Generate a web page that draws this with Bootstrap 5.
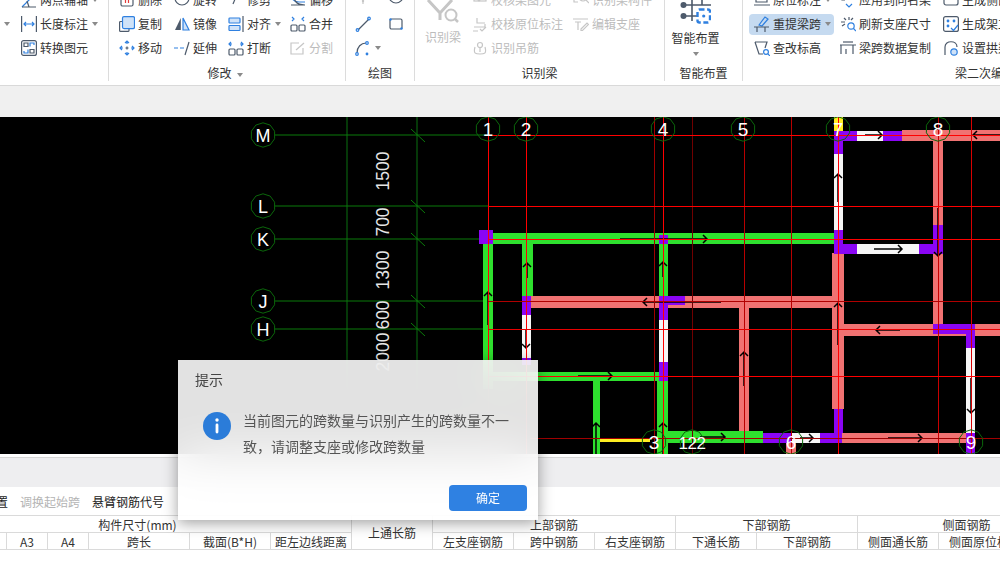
<!DOCTYPE html>
<html lang="zh">
<head>
  <meta charset="utf-8">
  <title>梁二次编辑</title>
  <link href="https://cdn.jsdelivr.net/npm/bootstrap@5.3.2/dist/css/bootstrap.min.css" rel="stylesheet">
  <style>
    html, body { margin: 0; height: 582px; overflow: hidden; background: #fff; }
    body { font-family: "Noto Sans CJK SC", "Liberation Sans", sans-serif; font-size: 12px; color: #333; }
    .app-page { position: relative; width: 1000px; height: 582px; overflow: hidden; }

    .rb-wrap { height: 86px; overflow: hidden; border-bottom: 1px solid #d9d9d9; }
    .rb-inner { margin-top: -12px; width: 1300px; }
    .rb-group { height: 93px; flex: none; border-right: 1px solid #dcdcdc; }
    .rb-cols { height: 72px; }
    .rb-col { flex: none; }
    .rb-item { height: 24px; gap: 3px; white-space: nowrap; line-height: 16px; }
    .rb-off { color: #bcbcbc; }
    .rb-active { background: #c5daf0; border-radius: 4px; height: 21px; margin: 1.5px 6px 1.5px 0; padding-left: 5px; }
    .rb-pad { padding-left: 5px; }
    .rb-label { height: 21px; line-height: 25px; text-align: center; white-space: nowrap; }
    .rb-caret { width: 0; height: 0; border: 3px solid transparent; border-top: 4px solid #8a8a8a; border-bottom: 0; margin-left: 1px; flex: none; }
    .rb-caret-lg { border-width: 4px 3.5px 0; margin: 0 4px 0 5px; }
    .rb-big { text-align: center; white-space: nowrap; line-height: 16px; }
    .rb-g1 { width: 109px; }
    .rb-g2 { width: 237px; padding-left: 10px; }
    .rb-g2 .rb-label { margin-left: -10px; }
    .rb-g3 { width: 69px; padding-left: 9px; }
    .rb-g3 .rb-label { margin-left: -9px; }
    .rb-g4 { width: 250px; padding-left: 10px; }
    .rb-g4 .rb-label { margin-left: -10px; }
    .rb-g5 { width: 78px; }
    .rb-g6 { width: 484px; padding-left: 6px; border-right: 0; }
    .rb-g6 .rb-label { margin-left: -6px; }
    .rb-smart { width: 49px; margin-left: 6px; }
    .rb-smart svg { margin-left: 9px; }
    .rb-smart-txt { margin-top: 6px; }
    .rb-smart-arrow { margin-top: 6px; }
    .rb-beam { width: 36px; margin-right: 11px; }
    .rb-beam-txt { margin-top: 4px; }
    .w-cut { width: 21px; padding-right: 11px; overflow: hidden; }
    .w-85 { width: 87px; }
    .w-55 { width: 55px; }
    .w-54 { width: 54px; }
    .w-62 { width: 62px; }
    .w-33 { width: 33px; }
    .w-101 { width: 101px; }
    .w-91 { width: 91px; }
    .w-103 { width: 103px; }

    .ic { width: 16px; height: 16px; flex: none; fill: none; stroke: #4d5a6b; stroke-width: 1.2; }
    .ic-big { display: block; fill: none; stroke: #4d5a6b; stroke-width: 1.6; }
    .sb { stroke: #2f80e0; }
    .sr { stroke: #e23b3b; }
    .fb { fill: #cfe2f8; }
    .fd { fill: #4d5a6b; stroke: none; }
    .fu { fill: #2f80e0; stroke: none; }
    .rb-off .ic, .rb-off .ic-big { stroke: #c6c6c6; }
    .rb-off .sb { stroke: #c6c6c6; }

    .gap-strip-a { height: 31px; background: #f0f0f0; }
    .cad-view { display: block; width: 1000px; height: 337px; background: #000; }
    .gap-strip-b { height: 4px; background: #fff; border-bottom: 1px solid #d6d6d6; }
    .gap-strip-c { height: 29px; background: #eeeef0; }
    .tool-row { height: 28px; margin-left: -16px; padding-top: 1px; gap: 12px; white-space: nowrap; color: #222; }
    .tool-off { color: #b4b4b4; }

    .grid-wrap { width: 1000px; overflow: hidden; }
    .grid-head { table-layout: fixed; width: 1152px; margin-left: -77px; --bs-table-bg: transparent; --bs-table-color: #333; --bs-border-color: #dadada; }
    .grid-head th, .grid-head td { padding: 0; height: 17px; line-height: 15px; font-size: 12px; font-weight: 400; text-align: center; vertical-align: middle; white-space: nowrap; overflow: hidden; }
    .grid-head .cell-left { text-align: left; padding-left: 10px; }

    .tip-box { position: absolute; left: 178px; top: 360px; width: 360px; height: 160px; border: 0; border-radius: 0; background: rgba(255,255,255,.885); -webkit-backdrop-filter: blur(24px); backdrop-filter: blur(24px); box-shadow: 0 3px 14px rgba(0,0,0,.38); padding: 10px 11px 9px 17px; }
    .tip-title { font-size: 14px; line-height: 18px; color: #444; }
    .tip-msg { font-size: 14px; line-height: 26px; color: #555; width: 270px; word-break: break-all; }
    .tip-body { margin-top: 19px; gap: 12px; }
    .tip-dot { width: 28px; height: 28px; margin-top: 5px; margin-left: 8px; flex: none; }
    .tip-btn { width: 78px; height: 26px; padding: 0; background: #2f81e2; border: 0; border-radius: 4px; font-size: 12px; line-height: 26px; color: #fff; }
    .tip-foot { margin-top: auto; }
  </style>
</head>
<body>
<div class="app-page">

  <div class="rb-wrap">
    <div class="rb-inner d-flex">

      <div class="rb-group rb-g1">
        <div class="rb-cols d-flex">
          <div class="rb-col w-cut">
            <div class="rb-item"></div>
            <div class="rb-item d-flex align-items-center justify-content-end"><span>线</span><i class="rb-caret"></i></div>
          </div>
          <div class="rb-col w-85">
            <div class="rb-item d-flex align-items-center"><svg class="ic" viewBox="0 0 16 16"><path class="sb" d="M1 15L14 2"/><path d="M1 15H15M6 9l2 6"/></svg><span>两点辅轴</span><i class="rb-caret"></i></div>
            <div class="rb-item d-flex align-items-center"><svg class="ic" viewBox="0 0 16 16"><path d="M.6 0V16M15.4 0V16"/><path class="sb" d="M3 8H13M5 6L3 8L5 10M11 6L13 8L11 10"/></svg><span>长度标注</span><i class="rb-caret"></i></div>
            <div class="rb-item d-flex align-items-center"><svg class="ic" viewBox="0 0 16 16"><rect x=".6" y=".6" width="14.8" height="14.8" rx="2"/><path d="M3 3h4v3.5H3zM9 9.5h4V13H9z"/><path class="sb" d="M9 6.5V3h4v2M7 9.5v3.5H3v-2"/></svg><span>转换图元</span></div>
          </div>
        </div>
        <div class="rb-label"></div>
      </div>

      <div class="rb-group rb-g2">
        <div class="rb-cols d-flex">
          <div class="rb-col w-55">
            <div class="rb-item d-flex align-items-center"><svg class="ic" viewBox="0 0 16 16"><rect x="2" y="1" width="12" height="13" rx="1.5"/><path class="sr" d="M6.5 3V11M9.5 3V11"/></svg><span>删除</span></div>
            <div class="rb-item d-flex align-items-center"><svg class="ic" viewBox="0 0 16 16"><path d="M3 5.500H1.600a1 1 0 0 0-1 1V14.400a1 1 0 0 0 1 1H9a1 1 0 0 0 1-1V13"/><rect class="sb fb" x="3.500" y=".6" width="12" height="12" rx="1.500"/></svg><span>复制</span></div>
            <div class="rb-item d-flex align-items-center"><svg class="ic" viewBox="0 0 16 16"><path class="sb" d="M8 1V4M8 12V15M1 8H4M12 8H15M6 3L8 1L10 3M6 13L8 15L10 13M3 6L1 8L3 10M13 6L15 8L13 10"/><path d="M6.500 8H9.500M8 6.500V9.500"/></svg><span>移动</span></div>
          </div>
          <div class="rb-col w-54">
            <div class="rb-item d-flex align-items-center"><svg class="ic" viewBox="0 0 16 16"><circle cx="8" cy="6" r="7"/></svg><span>旋转</span></div>
            <div class="rb-item d-flex align-items-center"><svg class="ic" viewBox="0 0 16 16"><path class="fd" d="M6.800 2V14H1z"/><path class="sb fb" d="M9 2L15 14H9z"/></svg><span>镜像</span></div>
            <div class="rb-item d-flex align-items-center"><svg class="ic" viewBox="0 0 16 16"><path class="sb" d="M0 8H4M6 8H10"/><path d="M11 15L15 2"/></svg><span>延伸</span></div>
          </div>
          <div class="rb-col w-62">
            <div class="rb-item d-flex align-items-center"><svg class="ic" viewBox="0 0 16 16"><path d="M5 12L10 0"/></svg><span>修剪</span></div>
            <div class="rb-item d-flex align-items-center"><svg class="ic" viewBox="0 0 16 16"><rect class="sb fb" x="1" y="2" width="11" height="5" rx=".8"/><rect class="sb fb" x="1" y="9.500" width="11" height="5" rx=".8"/><path d="M15 0V16"/></svg><span>对齐</span><i class="rb-caret"></i></div>
            <div class="rb-item d-flex align-items-center"><svg class="ic" viewBox="0 0 16 16"><rect x="1" y="9" width="6" height="6" rx="1"/><rect x="9" y="9" width="6" height="6" rx="1"/><path class="sb" d="M1 4H4M3 2L1 4L3 6M12 4H15M13 2L15 4L13 6"/></svg><span>打断</span></div>
          </div>
          <div class="rb-col">
            <div class="rb-item d-flex align-items-center"><svg class="ic" viewBox="0 0 16 16"><path class="sb" d="M1 0C1 6 3 10 9 10H15"/><path d="M3 0C3 8 6 13 15 13H1"/></svg><span>偏移</span></div>
            <div class="rb-item d-flex align-items-center"><svg class="ic" viewBox="0 0 16 16"><rect x="1" y="9" width="6" height="6" rx="1"/><rect x="9" y="9" width="6" height="6" rx="1"/><path class="sb" d="M2 1L4 3L2 5M14 1L12 3L14 5"/></svg><span>合并</span></div>
            <div class="rb-item rb-off d-flex align-items-center"><svg class="ic" viewBox="0 0 16 16"><path d="M9 3H1V14H13V8"/><path d="M6 10L14 3"/></svg><span>分割</span></div>
          </div>
        </div>
        <div class="rb-label">修改<i class="rb-caret rb-caret-lg d-inline-block align-middle"></i></div>
      </div>

      <div class="rb-group rb-g3">
        <div class="rb-cols d-flex">
          <div class="rb-col w-33">
            <div class="rb-item rb-off d-flex align-items-center"><svg class="ic" viewBox="0 0 16 16"><path d="M8 3V12M6 5h4"/><circle cx="8" cy="9" r=".6"/></svg></div>
            <div class="rb-item d-flex align-items-center"><svg class="ic" viewBox="0 0 16 16"><path d="M3 14L14 3"/><circle class="sb" cx="2.500" cy="14" r="1.300"/><circle class="sb" cx="14" cy="2.500" r="1.300"/></svg></div>
            <div class="rb-item d-flex align-items-center"><svg class="ic" viewBox="0 0 16 16"><path d="M2 13C2 7 6 3 11 3"/><circle class="sb" cx="2" cy="14" r="1.300"/><circle class="sb" cx="12" cy="3" r="1.300"/><circle class="fu" cx="12" cy="14" r="1.400"/></svg><i class="rb-caret"></i></div>
          </div>
          <div class="rb-col">
            <div class="rb-item d-flex align-items-center"><svg class="ic" viewBox="0 0 16 16"><circle cx="8" cy="4" r="7"/><circle class="fd" cx="8" cy="4" r="1"/></svg></div>
            <div class="rb-item d-flex align-items-center"><svg class="ic" viewBox="0 0 16 16"><rect x="2" y="3" width="12" height="10" rx="1.500"/><circle class="fu" cx="2.500" cy="3.500" r="1.200"/><circle class="fu" cx="13.500" cy="12.500" r="1.200"/></svg></div>
          </div>
        </div>
        <div class="rb-label">绘图</div>
      </div>

      <div class="rb-group rb-g4">
        <div class="rb-cols d-flex">
          <div class="rb-col rb-beam rb-off rb-big">
            <svg class="ic-big" width="36" height="37" viewBox="0 0 36 37"><path d="M3 12L15 25M27 12L15 25V32" stroke-width="3"/><circle cx="26" cy="27" r="5.500" stroke-width="2"/><path d="M30 31L33 34" stroke-width="2.500"/></svg>
            <div class="rb-beam-txt">识别梁</div>
          </div>
          <div class="rb-col w-101">
            <div class="rb-item rb-off d-flex align-items-center"><svg class="ic" viewBox="0 0 16 16"><rect x="2" y="0" width="12" height="9"/><path d="M4 6L7 9L13 3"/></svg><span>校核梁图元</span></div>
            <div class="rb-item rb-off d-flex align-items-center"><svg class="ic" viewBox="0 0 16 16"><path d="M5 2V7H13M2 11H13V8M1 15H6M8 13L10 15L14 11"/></svg><span>校核原位标注</span></div>
            <div class="rb-item rb-off d-flex align-items-center"><svg class="ic" viewBox="0 0 16 16"><circle cx="8" cy="5" r="2.500"/><path d="M3 7C1 14 4 14 8 14S15 14 13 7M8 8V12"/></svg><span>识别吊筋</span></div>
          </div>
          <div class="rb-col">
            <div class="rb-item rb-off d-flex align-items-center"><svg class="ic" viewBox="0 0 16 16"><path d="M1 2V10H5"/><circle cx="10" cy="5" r="4"/><path d="M13 8L16 11"/></svg><span>识别梁构件</span></div>
            <div class="rb-item rb-off d-flex align-items-center"><svg class="ic" viewBox="0 0 16 16"><path d="M0 3H15M2 6H8M5 6V14M8 13L14 7L15.500 8.500L9.500 14.500H8z"/></svg><span>编辑支座</span></div>
          </div>
        </div>
        <div class="rb-label">识别梁</div>
      </div>

      <div class="rb-group rb-g5">
        <div class="rb-cols rb-big rb-smart">
          <svg class="ic-big" width="31" height="36" viewBox="0 0 31 36"><g transform="translate(0,12)"><path d="M3 5H31M3 16H17M12 -6V21M22 -6V5"/><circle class="fd" cx="3.500" cy="5" r="3"/><circle class="fd" cx="3.500" cy="16" r="3"/><rect class="sb" x="17.500" y="9.500" width="12.500" height="13" rx="2" stroke-width="2.400" stroke-dasharray="5 2.600"/><circle class="fu" cx="23.700" cy="16" r="1.600"/></g></svg>
          <div class="rb-smart-txt">智能布置</div>
          <div class="rb-smart-arrow d-flex justify-content-center"><i class="rb-caret"></i></div>
        </div>
        <div class="rb-label">智能布置</div>
      </div>

      <div class="rb-group rb-g6">
        <div class="rb-cols d-flex">
          <div class="rb-col w-91">
            <div class="rb-item rb-pad d-flex align-items-center"><svg class="ic" viewBox="0 0 16 16"><path d="M2 4V10H13V4zM0 13H16"/></svg><span>原位标注</span><i class="rb-caret"></i></div>
            <div class="rb-item rb-active d-flex align-items-center"><svg class="ic" viewBox="0 0 16 16"><path class="sb" d="M5 9L11 1L14 3L8 10z"/><path d="M0 11H15M3 11V16M11 11V16"/></svg><span>重提梁跨</span><i class="rb-caret"></i></div>
            <div class="rb-item rb-pad d-flex align-items-center"><svg class="ic" viewBox="0 0 16 16"><path d="M1 2H13L11 8M1 2L5 14H9"/><circle class="sb" cx="12" cy="12" r="2.400"/><path class="sb" d="M14 14L16 16"/></svg><span>查改标高</span></div>
          </div>
          <div class="rb-col w-103">
            <div class="rb-item d-flex align-items-center"><svg class="ic" viewBox="0 0 16 16"><path d="M2 2V8H5"/><circle class="sb" cx="9" cy="4" r="3"/><path class="sb" d="M6 12L9 15L12 12"/></svg><span>应用到同名梁</span></div>
            <div class="rb-item d-flex align-items-center"><svg class="ic" viewBox="0 0 16 16"><path d="M1 6H5M4 2L6 4M9 1V4M13 2L11 4M2 10L5 8"/><circle class="sb" cx="11" cy="10" r="3.200"/><path class="sb" d="M13.500 12.500L16 15"/></svg><span>刷新支座尺寸</span></div>
            <div class="rb-item d-flex align-items-center"><svg class="ic" viewBox="0 0 16 16"><path d="M0 5H16M1 5V14M13 5V14M6 9V14"/><path d="M3 2H13"/></svg><span>梁跨数据复制</span></div>
          </div>
          <div class="rb-col">
            <div class="rb-item d-flex align-items-center"><svg class="ic" viewBox="0 0 16 16"><rect x="1" y="-2" width="14" height="15" rx="2"/><path class="sb" d="M5 5H11"/></svg><span>生成侧面筋</span></div>
            <div class="rb-item d-flex align-items-center"><svg class="ic" viewBox="0 0 16 16"><rect x=".6" y=".6" width="14.800" height="14.800" rx="2"/><circle class="fu" cx="5" cy="5" r="1.400"/><circle class="fu" cx="11" cy="5" r="1.400"/><circle class="fu" cx="5" cy="10" r="1.400"/><path class="sb" d="M8 12L10.500 14.500L15 9"/></svg><span>生成架立筋</span></div>
            <div class="rb-item d-flex align-items-center"><svg class="ic" viewBox="0 0 16 16"><path d="M2 15V7C2 0 14 0 14 7"/><circle class="sb fb" cx="11" cy="12" r="3.200"/></svg><span>设置拱梁</span></div>
          </div>
        </div>
        <div class="rb-label">梁二次编辑</div>
      </div>

    </div>
  </div>

  <div class="gap-strip-a"></div>

  <svg id="cadView" class="cad-view" viewBox="0 117 1000 337" font-family="'Liberation Sans', sans-serif"></svg>

  <div class="gap-strip-b"></div>
  <div class="gap-strip-c"></div>

  <div class="tool-row d-flex align-items-center">
    <span>布置</span>
    <span class="tool-off">调换起始跨</span>
    <span>悬臂钢筋代号</span>
  </div>

  <div class="grid-wrap">
    <table class="table table-bordered grid-head mb-0">
      <colgroup>
        <col width="42"><col width="41"><col width="41"><col width="41"><col width="101"><col width="81"><col width="81"><col width="81">
        <col width="81"><col width="81"><col width="81"><col width="81"><col width="101"><col width="81"><col width="81"><col width="56">
      </colgroup>
      <thead>
        <tr>
          <th colspan="7">构件尺寸(mm)</th>
          <th rowspan="2">上通长筋</th>
          <th colspan="3">上部钢筋</th>
          <th colspan="2">下部钢筋</th>
          <th colspan="3">侧面钢筋</th>
        </tr>
        <tr>
          <td>A1</td><td>A2</td><td>A3</td><td>A4</td><td>跨长</td><td>截面(B*H)</td><td>距左边线距离</td>
          <td>左支座钢筋</td><td>跨中钢筋</td><td>右支座钢筋</td>
          <td>下通长筋</td><td>下部钢筋</td>
          <td>侧面通长筋</td><td class="cell-left">侧面原位标注筋</td><td></td>
        </tr>
      </thead>
    </table>
  </div>

  <div class="card tip-box">
    <div class="tip-title">提示</div>
    <div class="tip-body d-flex">
      <svg class="tip-dot" viewBox="0 0 28 28"><circle cx="14" cy="14" r="14" fill="#2b7cd9"/><circle cx="14" cy="8" r="1.700" fill="#fff"/><rect x="12.600" y="11.500" width="2.800" height="10" rx="1.400" fill="#fff"/></svg>
      <div class="tip-msg">当前图元的跨数量与识别产生的跨数量不一致，请调整支座或修改跨数量</div>
    </div>
    <div class="tip-foot d-flex justify-content-end">
      <button type="button" class="btn btn-primary tip-btn">确定</button>
    </div>
  </div>
</div>

<script>
  const GREEN = '#2ee02e', PINK = '#f07272', PURPLE = '#8a05f5', WHITE = '#f6f6f6', YELLOW = '#ffee22';
  const beams = [
    [488,233,346,11,GREEN],[483,239,10,150,GREEN],[522,244,11,52,GREEN],[659,244,9,52,GREEN],
    [490,372,169,9,GREEN],[593,381,7,73,GREEN],[657,381,11,73,GREEN],[668,431,95,12,GREEN],
    [531,296,303,12,PINK],[739,308,10,123,PINK],[832,253,12,156,PINK],[902,130,98,11,PINK],
    [933,141,10,84,PINK],[933,254,10,70,PINK],[844,324,156,12,PINK],[842,433,129,10,PINK],[786,443,10,11,PINK],
    [834,117,9,14,YELLOW],[600,438,50,4,YELLOW],
    [834,154,9,76,WHITE],[857,131,26,10,WHITE],[857,244,62,10,WHITE],[522,315,9,43,WHITE],[659,320,9,42,WHITE],
    [966,348,9,85,WHITE],[792,433,28,10,WHITE],
    [479,230,14,14,PURPLE],[659,235,9,9,PURPLE],[834,131,9,23,PURPLE],[834,131,23,10,PURPLE],[883,131,19,10,PURPLE],
    [834,230,9,24,PURPLE],[834,244,23,10,PURPLE],[919,244,24,10,PURPLE],[933,225,10,29,PURPLE],
    [522,296,9,19,PURPLE],[522,358,9,7,PURPLE],[659,296,26,9,PURPLE],[659,296,9,24,PURPLE],[659,362,9,19,PURPLE],
    [933,324,42,10,PURPLE],[966,324,9,24,PURPLE],[763,433,29,10,PURPLE],[820,433,22,10,PURPLE],[834,409,9,24,PURPLE],[966,433,9,21,PURPLE]
  ];
  const arrows = [
    [488,325,488,292],[527,278,527,263],[526,330,526,348],[620,239,707,239],[663,277,663,262],[721,302,643,302],
    [865,135,882,135],[838,202,838,174],[874,249,902,249],[938,208,938,256],[838,345,838,303],[900,330,876,330],
    [1000,135,973,135],[578,376,612,376],[744,386,744,352],[971,378,971,413],[596,454,596,423],[663,454,663,423],
    [700,437,725,437],[800,438,813,438],[888,438,922,438]
  ];
  // axis lines: x or y, colour
  const vReds = [[488,'#f00'],[526,'#f00'],[654,'#a00000'],[663,'#f00'],[692,'#700000'],[744,'#b80000'],[791,'#b80000'],[838,'#f00'],[938,'#c80000'],[971,'#d80000']];
  const hReds = [[135,'#f00',488],[206,'#f00',488],[239,'#f00',488],[301,'#b00000',488],[329,'#e80000',488],[376,'#f00',488],[438,'#a00000',530]];
  const rowAxes = [['M',135],['L',206],['K',239],['J',301],['H',329]];
  const colAxes = [['1',488,129],['2',526,129],['4',663,129],['5',743,129],['7',838,129],['8',938,129],['3',654,442],['122',692,442],['6',791,442],['9',971,442]];
  const dims = [['1500',171],['700',222],['1300',270],['600',315],['2000',352]];

  function ring(cx, cy) {
    let pts = [];
    for (let i = 0; i < 10; i++) {
      const a = Math.PI / 10 + i * Math.PI / 5;
      pts.push((cx + 12.2 * Math.cos(a)).toFixed(1) + ',' + (cy + 12.2 * Math.sin(a)).toFixed(1));
    }
    return '<polygon points="' + pts.join(' ') + '" fill="none" stroke="#0b660b" stroke-width="1"/>';
  }
  function arrow(a) {
    const [x1,y1,x2,y2] = a, dx = Math.sign(x2-x1), dy = Math.sign(y2-y1);
    const head = 'M' + (x2-dx*4+dy*4) + ' ' + (y2-dy*4+dx*4) + 'L' + x2 + ' ' + y2 + 'L' + (x2-dx*4-dy*4) + ' ' + (y2-dy*4-dx*4);
    return '<path d="M' + x1 + ' ' + y1 + 'L' + x2 + ' ' + y2 + head + '" fill="none" stroke="#000" stroke-width="1.500"/>';
  }
  let s = '';
  s += '<path d="M347 117V454M417 117V454" stroke="#0a7010" fill="none"/>';
  rowAxes.forEach(r => {
    s += '<path d="M275 ' + r[1] + 'H488" stroke="#0a7a0a"/>';
    s += '<path d="M411 ' + (r[1]-6) + 'L425 ' + (r[1]+7) + '" stroke="#0a7a0a"/>';
  });
  beams.forEach(b => { s += '<rect x="'+b[0]+'" y="'+b[1]+'" width="'+b[2]+'" height="'+b[3]+'" fill="'+b[4]+'"/>'; });
  arrows.forEach(a => { s += arrow(a); });
  vReds.forEach(v => { s += '<path d="M'+(v[0]+.5)+' 117V454" stroke="'+v[1]+'"/>'; });
  hReds.forEach(h => { s += '<path d="M'+h[2]+' '+(h[0]+.5)+'H1000" stroke="'+h[1]+'"/>'; });
  rowAxes.forEach(r => {
    s += ring(263, r[1]);
    s += '<text x="263" y="'+(r[1]+6.5)+'" fill="#fff" font-size="18" text-anchor="middle">'+r[0]+'</text>';
  });
  colAxes.forEach(c => {
    s += ring(c[1], c[2]);
    s += '<text x="'+c[1]+'" y="'+(c[2]+7)+'" fill="#fff" font-size="'+(c[0].length > 1 ? 17 : 19)+'" text-anchor="middle" letter-spacing="'+(c[0].length > 1 ? -.5 : 0)+'">'+c[0]+'</text>';
  });
  dims.forEach(d => {
    s += '<text transform="translate(389 '+d[1]+') rotate(-90)" fill="#e6e6e6" font-size="17.5" text-anchor="middle">'+d[0]+'</text>';
  });
  document.getElementById('cadView').innerHTML = s;
</script>
<script src="https://cdn.jsdelivr.net/npm/bootstrap@5.3.2/dist/js/bootstrap.bundle.min.js"></script>
</body>
</html>
